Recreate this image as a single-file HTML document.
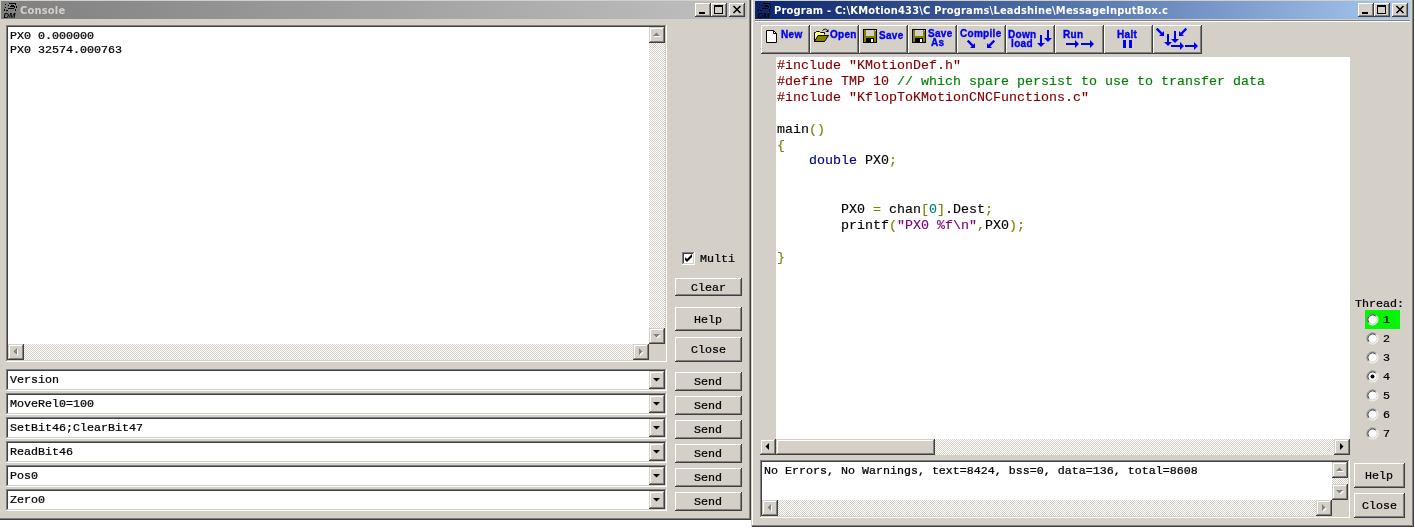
<!DOCTYPE html><html><head><meta charset="utf-8"><title>Console / Program</title><style>
*{margin:0;padding:0;box-sizing:border-box}
html,body{width:1415px;height:529px;background:#fff;overflow:hidden}
body{position:relative;font-family:"Liberation Mono",monospace;font-size:12px;color:#000}
.ab{position:absolute}
.face{background:#d4d0c8}
.btn{position:absolute;background:#d4d0c8;box-shadow:inset -1px -1px #404040,inset 1px 1px #fff,inset -2px -2px #808080,inset 2px 2px #d4d0c8;text-align:center;white-space:pre}
.sbtn{position:absolute;width:16px;height:16px;background:#d4d0c8;box-shadow:inset -1px -1px #404040,inset 1px 1px #d4d0c8,inset -2px -2px #808080,inset 2px 2px #fff}
.sunk{position:absolute;background:#fff;box-shadow:inset -1px -1px #fff,inset 1px 1px #808080,inset -2px -2px #d4d0c8,inset 2px 2px #404040}
.trk{position:absolute;background-color:#eae8e4;background-image:conic-gradient(#fff 25%,#d4d0c8 0 50%,#fff 0 75%,#d4d0c8 0);background-size:2px 2px}
.m9{font-family:"Liberation Mono",monospace;font-size:11.667px;line-height:15.385px;white-space:pre;position:absolute;transform-origin:0 0;transform:scaleY(.91);-webkit-text-stroke:.25px}
.m10{font-family:"Liberation Mono",monospace;font-size:13.333px;line-height:17.582px;white-space:pre;position:absolute;transform-origin:0 0;transform:scaleY(.91);-webkit-text-stroke:.15px}
.ttl{position:absolute;font-family:"DejaVu Sans Condensed","DejaVu Sans","Liberation Sans",sans-serif;font-weight:bold;font-size:11px;letter-spacing:.2px;line-height:18px;white-space:pre}
.tb{position:absolute;top:25px;width:49px;height:29px;background:#d4d0c8;box-shadow:inset -1px -1px #404040,inset 1px 1px #fff,inset -2px -2px #808080}
.tl{position:absolute;font-family:"Liberation Sans",sans-serif;font-weight:bold;font-size:10px;line-height:9px;color:#0000f0;white-space:pre;letter-spacing:.3px;-webkit-text-stroke:.35px #0000f0}
svg{position:absolute;overflow:visible}
.r{color:#800000}.g{color:#008000}.o{color:#808000}.n{color:#000080}.t{color:#008080}.p{color:#800080}
</style></head><body><div id="root" style="position:absolute;left:0;top:0;width:1415px;height:529px;will-change:transform">
<div class="ab face" style="left:0;top:0;width:751px;height:520px;box-shadow:inset -1px -1px #404040,inset -2px -2px #808080"></div>
<div class="ab" style="left:1px;top:1px;width:746px;height:18px;background:linear-gradient(90deg,#808080,#c0c0c0)"></div>
<div class="ttl" style="left:20px;top:2px;color:#d4d0c8">Console</div>
<svg style="left:2px;top:2px" width="16" height="16" viewBox="0 0 16 16"><path d="M7 1h7v1h-7zM13 2h1v1h-1zM3 2h1v1h-1zM9 3h3v1h-3zM6 3h1v1h-1zM8 4h5v1h-5zM14 4h1v2h-1zM3 5h1v1h-1zM12 5h1v1h-1zM6 6h6v1h-6zM2 7h1v2h-1zM13 7h1v2h-1zM4 8h2v1h-2z" fill="#000"/><text x="1.5" y="16.2" font-family="Liberation Sans,sans-serif" font-size="7" font-weight="bold" font-style="italic" fill="#000" textLength="12" lengthAdjust="spacingAndGlyphs">DM</text></svg>
<div class="btn" style="left:695px;top:3px;width:16px;height:14px"></div>
<div class="ab" style="left:699px;top:12px;width:6px;height:2px;background:#000"></div>
<div class="btn" style="left:711px;top:3px;width:16px;height:14px"></div>
<div class="ab" style="left:714px;top:5px;width:9px;height:9px;border:1px solid #000;border-top-width:2px"></div>
<div class="btn" style="left:729px;top:3px;width:16px;height:14px"></div>
<svg style="left:733px;top:6px" width="8" height="7" viewBox="0 0 8 7"><path d="M0.5 0 L7.5 7 M7.5 0 L0.5 7" stroke="#000" stroke-width="1.6" fill="none"/></svg>
<div class="sunk" style="left:6px;top:25px;width:661px;height:337px"></div>
<div class="m9" style="left:10px;top:30px">PX0 0.000000
PX0 32574.000763</div>
<div class="trk" style="left:649px;top:27px;width:16px;height:317px"></div>
<div class="sbtn" style="left:649px;top:27px"></div>
<svg style="left:649px;top:27px" width="16" height="16" viewBox="0 0 16 16"><polygon points="4,9 11,9 7.5,5.5" fill="#fff" transform="translate(1,1)"/><polygon points="4,9 11,9 7.5,5.5" fill="#808080"/></svg>
<div class="sbtn" style="left:649px;top:328px"></div>
<svg style="left:649px;top:328px" width="16" height="16" viewBox="0 0 16 16"><polygon points="4,6 11,6 7.5,9.5" fill="#fff" transform="translate(1,1)"/><polygon points="4,6 11,6 7.5,9.5" fill="#808080"/></svg>
<div class="trk" style="left:8px;top:344px;width:641px;height:16px"></div>
<div class="sbtn" style="left:8px;top:344px"></div>
<svg style="left:8px;top:344px" width="16" height="16" viewBox="0 0 16 16"><polygon points="9,4 9,11 5.5,7.5" fill="#fff" transform="translate(1,1)"/><polygon points="9,4 9,11 5.5,7.5" fill="#808080"/></svg>
<div class="sbtn" style="left:633px;top:344px"></div>
<svg style="left:633px;top:344px" width="16" height="16" viewBox="0 0 16 16"><polygon points="6,4 6,11 9.5,7.5" fill="#fff" transform="translate(1,1)"/><polygon points="6,4 6,11 9.5,7.5" fill="#808080"/></svg>
<div class="ab face" style="left:649px;top:344px;width:16px;height:16px"></div>
<div class="sunk" style="left:682px;top:252px;width:13px;height:13px"></div>
<svg style="left:685px;top:255px" width="7" height="7" viewBox="0 0 7 7"><path d="M0 2v3l2 2 5-5v-3l-5 5z" fill="#000" transform="translate(0,0)"/></svg>
<div class="m9" style="left:700px;top:253px">Multi</div>
<div class="btn" style="left:675px;top:278px;width:67px;height:18px"></div>
<div class="m9" style="left:691px;top:282px">Clear</div>
<div class="btn" style="left:675px;top:307px;width:67px;height:24px"></div>
<div class="m9" style="left:694px;top:314px">Help</div>
<div class="btn" style="left:675px;top:337px;width:67px;height:25px"></div>
<div class="m9" style="left:691px;top:344px">Close</div>
<div class="sunk" style="left:6px;top:369px;width:661px;height:22px"></div>
<div class="m9" style="left:10px;top:374px">Version</div>
<div class="sbtn" style="left:649px;top:371px;height:18px"></div>
<svg style="left:649px;top:371px" width="16" height="18" viewBox="0 0 16 18"><polygon points="4,7 11,7 7.5,10.5" fill="#000"/></svg>
<div class="btn" style="left:675px;top:372px;width:67px;height:19px"></div>
<div class="m9" style="left:694px;top:376px">Send</div>
<div class="sunk" style="left:6px;top:393px;width:661px;height:22px"></div>
<div class="m9" style="left:10px;top:398px">MoveRel0=100</div>
<div class="sbtn" style="left:649px;top:395px;height:18px"></div>
<svg style="left:649px;top:395px" width="16" height="18" viewBox="0 0 16 18"><polygon points="4,7 11,7 7.5,10.5" fill="#000"/></svg>
<div class="btn" style="left:675px;top:396px;width:67px;height:19px"></div>
<div class="m9" style="left:694px;top:400px">Send</div>
<div class="sunk" style="left:6px;top:417px;width:661px;height:22px"></div>
<div class="m9" style="left:10px;top:422px">SetBit46;ClearBit47</div>
<div class="sbtn" style="left:649px;top:419px;height:18px"></div>
<svg style="left:649px;top:419px" width="16" height="18" viewBox="0 0 16 18"><polygon points="4,7 11,7 7.5,10.5" fill="#000"/></svg>
<div class="btn" style="left:675px;top:420px;width:67px;height:19px"></div>
<div class="m9" style="left:694px;top:424px">Send</div>
<div class="sunk" style="left:6px;top:441px;width:661px;height:22px"></div>
<div class="m9" style="left:10px;top:446px">ReadBit46</div>
<div class="sbtn" style="left:649px;top:443px;height:18px"></div>
<svg style="left:649px;top:443px" width="16" height="18" viewBox="0 0 16 18"><polygon points="4,7 11,7 7.5,10.5" fill="#000"/></svg>
<div class="btn" style="left:675px;top:444px;width:67px;height:19px"></div>
<div class="m9" style="left:694px;top:448px">Send</div>
<div class="sunk" style="left:6px;top:465px;width:661px;height:22px"></div>
<div class="m9" style="left:10px;top:470px">Pos0</div>
<div class="sbtn" style="left:649px;top:467px;height:18px"></div>
<svg style="left:649px;top:467px" width="16" height="18" viewBox="0 0 16 18"><polygon points="4,7 11,7 7.5,10.5" fill="#000"/></svg>
<div class="btn" style="left:675px;top:468px;width:67px;height:19px"></div>
<div class="m9" style="left:694px;top:472px">Send</div>
<div class="sunk" style="left:6px;top:489px;width:661px;height:22px"></div>
<div class="m9" style="left:10px;top:494px">Zero0</div>
<div class="sbtn" style="left:649px;top:491px;height:18px"></div>
<svg style="left:649px;top:491px" width="16" height="18" viewBox="0 0 16 18"><polygon points="4,7 11,7 7.5,10.5" fill="#000"/></svg>
<div class="btn" style="left:675px;top:492px;width:67px;height:19px"></div>
<div class="m9" style="left:694px;top:496px">Send</div>
<div class="ab face" style="left:751px;top:0;width:663px;height:527px;box-shadow:inset -1px -1px #404040,inset -2px -2px #808080,inset 2px 0 #fff,inset 1px 0 #d4d0c8"></div>
<div class="ab" style="left:751px;top:0;width:1px;height:527px;background:#d4d0c8"></div>
<div class="ab" style="left:755px;top:1px;width:655px;height:18px;background:linear-gradient(90deg,#0a246a,#a6caf0)"></div>
<svg style="left:756px;top:2px" width="16" height="16" viewBox="0 0 16 16"><path d="M7 1h7v1h-7zM13 2h1v1h-1zM3 2h1v1h-1zM9 3h3v1h-3zM6 3h1v1h-1zM8 4h5v1h-5zM14 4h1v2h-1zM3 5h1v1h-1zM12 5h1v1h-1zM6 6h6v1h-6zM2 7h1v2h-1zM13 7h1v2h-1zM4 8h2v1h-2z" fill="#000"/><text x="1.5" y="16.2" font-family="Liberation Sans,sans-serif" font-size="7" font-weight="bold" font-style="italic" fill="#000" textLength="12" lengthAdjust="spacingAndGlyphs">DM</text></svg>
<div class="ttl" style="left:774px;top:2px;color:#fff">Program - C:\KMotion433\C Programs\Leadshine\MessageInputBox.c</div>
<div class="btn" style="left:1358px;top:3px;width:16px;height:14px"></div>
<div class="ab" style="left:1362px;top:12px;width:6px;height:2px;background:#000"></div>
<div class="btn" style="left:1374px;top:3px;width:16px;height:14px"></div>
<div class="ab" style="left:1377px;top:5px;width:9px;height:9px;border:1px solid #000;border-top-width:2px"></div>
<div class="btn" style="left:1392px;top:3px;width:16px;height:14px"></div>
<svg style="left:1396px;top:6px" width="8" height="7" viewBox="0 0 8 7"><path d="M0.5 0 L7.5 7 M7.5 0 L0.5 7" stroke="#000" stroke-width="1.6" fill="none"/></svg>
<div class="ab" style="left:755px;top:20px;width:655px;height:1px;background:#808080"></div>
<div class="ab" style="left:755px;top:21px;width:655px;height:1px;background:#fff"></div>
<div class="tb" style="left:761px"></div>
<div class="tb" style="left:810px"></div>
<div class="tb" style="left:859px"></div>
<div class="tb" style="left:908px"></div>
<div class="tb" style="left:957px"></div>
<div class="tb" style="left:1006px"></div>
<div class="tb" style="left:1055px"></div>
<div class="tb" style="left:1104px"></div>
<div class="tb" style="left:1153px"></div>
<svg style="left:766px;top:30px" width="12" height="14" viewBox="0 0 12 14"><path d="M0.5 0.5h7l3 3v9h-10z" fill="#fff" stroke="#000"/><path d="M7.500 0.500v3h3" fill="none" stroke="#000"/></svg>
<div class="tl" style="left:781px;top:30px">New</div>
<svg style="left:814px;top:28px" width="16" height="15" viewBox="0 0 16 15"><path d="M0.500 13.500v-9h1l1-1h3l1 1h4v2" fill="#ffff80" stroke="#000"/><path d="M0.500 13.500l3.500-6h10.500l-4 6z" fill="#808000" stroke="#000"/><path d="M8.500 2.500q3-3 5.500 0.500" fill="none" stroke="#000"/><path d="M14.500 1v3h-3z" fill="#000"/></svg>
<div class="tl" style="left:830px;top:30px">Open</div>
<svg style="left:863px;top:29px" width="14" height="14" viewBox="0 0 14 14"><rect x="0.500" y="0.500" width="13" height="13" fill="#808000" stroke="#000"/><rect x="3" y="1" width="8" height="6" fill="#d4d0c8"/><rect x="3" y="9" width="8" height="4" fill="#000"/><rect x="8" y="10" width="2" height="3" fill="#fff"/><rect x="12" y="1" width="1" height="1" fill="#d4d0c8"/></svg>
<div class="tl" style="left:879px;top:31px">Save</div>
<svg style="left:912px;top:29px" width="14" height="14" viewBox="0 0 14 14"><rect x="0.500" y="0.500" width="13" height="13" fill="#808000" stroke="#000"/><rect x="3" y="1" width="8" height="6" fill="#d4d0c8"/><rect x="3" y="9" width="8" height="4" fill="#000"/><rect x="8" y="10" width="2" height="3" fill="#fff"/><rect x="12" y="1" width="1" height="1" fill="#d4d0c8"/></svg>
<div class="tl" style="left:928px;top:29px">Save</div>
<div class="tl" style="left:931px;top:38px">As</div>
<div class="tl" style="left:960px;top:29px">Compile</div>
<svg style="left:0;top:0" width="1415" height="529" viewBox="0 0 1415 529"><line x1="967.7" y1="40.7" x2="973" y2="46" stroke="#0000f0" stroke-width="2.4"/><polygon points="975,48 975,43 970,48" fill="#0000f0"/><line x1="994.3" y1="40.7" x2="989" y2="46" stroke="#0000f0" stroke-width="2.4"/><polygon points="987,48 987,43 992,48" fill="#0000f0"/></svg>
<div class="tl" style="left:1008px;top:30px">Down
 load</div>
<svg style="left:0;top:0" width="1415" height="529" viewBox="0 0 1415 529"><rect x="1040.0" y="35" width="2" height="8" fill="#0000f0"/><polygon points="1041,47 1037,43 1045,43" fill="#0000f0"/><rect x="1047.0" y="30" width="2" height="8" fill="#0000f0"/><polygon points="1048,42 1044,38 1052,38" fill="#0000f0"/></svg>
<div class="tl" style="left:1063px;top:30px">Run</div>
<svg style="left:0;top:0" width="1415" height="529" viewBox="0 0 1415 529"><rect x="1066" y="43.0" width="9" height="2" fill="#0000f0"/><polygon points="1079,44 1075,40 1075,48" fill="#0000f0"/><rect x="1081" y="43.0" width="9" height="2" fill="#0000f0"/><polygon points="1094,44 1090,40 1090,48" fill="#0000f0"/></svg>
<div class="tl" style="left:1117px;top:30px">Halt</div>
<div class="ab" style="left:1123px;top:40px;width:3px;height:8px;background:#0000f0"></div>
<div class="ab" style="left:1129px;top:40px;width:3px;height:8px;background:#0000f0"></div>
<svg style="left:0;top:0" width="1415" height="529" viewBox="0 0 1415 529"><line x1="1156.7" y1="28.7" x2="1162" y2="34" stroke="#0000f0" stroke-width="2.4"/><polygon points="1164,36 1164,31 1159,36" fill="#0000f0"/><line x1="1186.3" y1="28.7" x2="1181" y2="34" stroke="#0000f0" stroke-width="2.4"/><polygon points="1179,36 1179,31 1184,36" fill="#0000f0"/><rect x="1167.0" y="34" width="2" height="8" fill="#0000f0"/><polygon points="1168,46 1164,42 1172,42" fill="#0000f0"/><rect x="1174.0" y="31" width="2" height="8" fill="#0000f0"/><polygon points="1175,43 1171,39 1179,39" fill="#0000f0"/><rect x="1171" y="45.0" width="9" height="2" fill="#0000f0"/><polygon points="1184,46 1180,42 1180,50" fill="#0000f0"/><rect x="1185" y="45.0" width="9" height="2" fill="#0000f0"/><polygon points="1198,46 1194,42 1194,50" fill="#0000f0"/></svg>
<div class="ab" style="left:776px;top:57px;width:574px;height:382px;background:#fff"></div>
<div class="m10" style="left:777px;top:58px"><span class="r">#include "KMotionDef.h"</span>
<span class="r">#define TMP 10 </span><span class="g">// which spare persist to use to transfer data</span>
<span class="r">#include "KflopToKMotionCNCFunctions.c"</span>

main<span class="o">()</span>
<span class="o">{</span>
    <span class="n">double</span> PX0<span class="o">;</span>


        PX0 <span class="o">=</span> chan<span class="o">[</span><span class="t">0</span><span class="o">]</span>.Dest<span class="o">;</span>
        printf<span class="o">(</span><span class="p">"PX0 %f\n"</span><span class="o">,</span>PX0<span class="o">);</span>

<span class="o">}</span></div>
<div class="trk" style="left:760px;top:439px;width:590px;height:16px"></div>
<div class="sbtn" style="left:760px;top:439px"></div>
<svg style="left:760px;top:439px" width="16" height="16" viewBox="0 0 16 16"><polygon points="9,4 9,11 5.5,7.5" fill="#000"/></svg>
<div class="sbtn" style="left:1334px;top:439px"></div>
<svg style="left:1334px;top:439px" width="16" height="16" viewBox="0 0 16 16"><polygon points="6,4 6,11 9.5,7.5" fill="#000"/></svg>
<div class="sbtn" style="left:776px;top:439px;width:159px"></div>
<div class="sunk" style="left:760px;top:460px;width:590px;height:58px"></div>
<div class="m9" style="left:764px;top:465px">No Errors, No Warnings, text=8424, bss=0, data=136, total=8608</div>
<div class="trk" style="left:1332px;top:462px;width:16px;height:38px"></div>
<div class="sbtn" style="left:1332px;top:462px"></div>
<svg style="left:1332px;top:462px" width="16" height="16" viewBox="0 0 16 16"><polygon points="4,9 11,9 7.5,5.5" fill="#fff" transform="translate(1,1)"/><polygon points="4,9 11,9 7.5,5.5" fill="#808080"/></svg>
<div class="sbtn" style="left:1332px;top:484px"></div>
<svg style="left:1332px;top:484px" width="16" height="16" viewBox="0 0 16 16"><polygon points="4,6 11,6 7.5,9.5" fill="#fff" transform="translate(1,1)"/><polygon points="4,6 11,6 7.5,9.5" fill="#808080"/></svg>
<div class="trk" style="left:762px;top:500px;width:570px;height:16px"></div>
<div class="sbtn" style="left:762px;top:500px"></div>
<svg style="left:762px;top:500px" width="16" height="16" viewBox="0 0 16 16"><polygon points="9,4 9,11 5.5,7.5" fill="#fff" transform="translate(1,1)"/><polygon points="9,4 9,11 5.5,7.5" fill="#808080"/></svg>
<div class="sbtn" style="left:1316px;top:500px"></div>
<svg style="left:1316px;top:500px" width="16" height="16" viewBox="0 0 16 16"><polygon points="6,4 6,11 9.5,7.5" fill="#fff" transform="translate(1,1)"/><polygon points="6,4 6,11 9.5,7.5" fill="#808080"/></svg>
<div class="ab face" style="left:1332px;top:500px;width:16px;height:16px"></div>
<div class="btn" style="left:1354px;top:463px;width:51px;height:25px"></div>
<div class="m9" style="left:1365px;top:470px">Help</div>
<div class="btn" style="left:1354px;top:493px;width:51px;height:25px"></div>
<div class="m9" style="left:1362px;top:500px">Close</div>
<div class="m9" style="left:1355px;top:298px">Thread:</div>
<div class="ab" style="left:1365px;top:310px;width:35px;height:19px;background:#06f406"></div>
<svg style="left:1366px;top:313px" width="13" height="13" viewBox="0 0 13 13"><circle cx="6.500" cy="6.500" r="5" fill="#fff"/><path d="M10.390 2.610A5.500 5.500 0 0 0 2.610 10.390" fill="none" stroke="#808080" stroke-width="1"/><path d="M10.390 2.610A5.500 5.500 0 0 1 2.610 10.390" fill="none" stroke="#fff" stroke-width="1"/><path d="M9.680 3.320A4.500 4.500 0 0 0 3.320 9.680" fill="none" stroke="#404040" stroke-width="1"/><path d="M9.680 3.320A4.500 4.500 0 0 1 3.320 9.680" fill="none" stroke="#d4d0c8" stroke-width="1"/></svg>
<div class="m9" style="left:1383px;top:314px">1</div>
<svg style="left:1366px;top:332px" width="13" height="13" viewBox="0 0 13 13"><circle cx="6.500" cy="6.500" r="5" fill="#fff"/><path d="M10.390 2.610A5.500 5.500 0 0 0 2.610 10.390" fill="none" stroke="#808080" stroke-width="1"/><path d="M10.390 2.610A5.500 5.500 0 0 1 2.610 10.390" fill="none" stroke="#fff" stroke-width="1"/><path d="M9.680 3.320A4.500 4.500 0 0 0 3.320 9.680" fill="none" stroke="#404040" stroke-width="1"/><path d="M9.680 3.320A4.500 4.500 0 0 1 3.320 9.680" fill="none" stroke="#d4d0c8" stroke-width="1"/></svg>
<div class="m9" style="left:1383px;top:333px">2</div>
<svg style="left:1366px;top:351px" width="13" height="13" viewBox="0 0 13 13"><circle cx="6.500" cy="6.500" r="5" fill="#fff"/><path d="M10.390 2.610A5.500 5.500 0 0 0 2.610 10.390" fill="none" stroke="#808080" stroke-width="1"/><path d="M10.390 2.610A5.500 5.500 0 0 1 2.610 10.390" fill="none" stroke="#fff" stroke-width="1"/><path d="M9.680 3.320A4.500 4.500 0 0 0 3.320 9.680" fill="none" stroke="#404040" stroke-width="1"/><path d="M9.680 3.320A4.500 4.500 0 0 1 3.320 9.680" fill="none" stroke="#d4d0c8" stroke-width="1"/></svg>
<div class="m9" style="left:1383px;top:352px">3</div>
<svg style="left:1366px;top:370px" width="13" height="13" viewBox="0 0 13 13"><circle cx="6.500" cy="6.500" r="5" fill="#fff"/><path d="M10.390 2.610A5.500 5.500 0 0 0 2.610 10.390" fill="none" stroke="#808080" stroke-width="1"/><path d="M10.390 2.610A5.500 5.500 0 0 1 2.610 10.390" fill="none" stroke="#fff" stroke-width="1"/><path d="M9.680 3.320A4.500 4.500 0 0 0 3.320 9.680" fill="none" stroke="#404040" stroke-width="1"/><path d="M9.680 3.320A4.500 4.500 0 0 1 3.320 9.680" fill="none" stroke="#d4d0c8" stroke-width="1"/><circle cx="6.500" cy="6.500" r="2" fill="#000"/></svg>
<div class="m9" style="left:1383px;top:371px">4</div>
<svg style="left:1366px;top:389px" width="13" height="13" viewBox="0 0 13 13"><circle cx="6.500" cy="6.500" r="5" fill="#fff"/><path d="M10.390 2.610A5.500 5.500 0 0 0 2.610 10.390" fill="none" stroke="#808080" stroke-width="1"/><path d="M10.390 2.610A5.500 5.500 0 0 1 2.610 10.390" fill="none" stroke="#fff" stroke-width="1"/><path d="M9.680 3.320A4.500 4.500 0 0 0 3.320 9.680" fill="none" stroke="#404040" stroke-width="1"/><path d="M9.680 3.320A4.500 4.500 0 0 1 3.320 9.680" fill="none" stroke="#d4d0c8" stroke-width="1"/></svg>
<div class="m9" style="left:1383px;top:390px">5</div>
<svg style="left:1366px;top:408px" width="13" height="13" viewBox="0 0 13 13"><circle cx="6.500" cy="6.500" r="5" fill="#fff"/><path d="M10.390 2.610A5.500 5.500 0 0 0 2.610 10.390" fill="none" stroke="#808080" stroke-width="1"/><path d="M10.390 2.610A5.500 5.500 0 0 1 2.610 10.390" fill="none" stroke="#fff" stroke-width="1"/><path d="M9.680 3.320A4.500 4.500 0 0 0 3.320 9.680" fill="none" stroke="#404040" stroke-width="1"/><path d="M9.680 3.320A4.500 4.500 0 0 1 3.320 9.680" fill="none" stroke="#d4d0c8" stroke-width="1"/></svg>
<div class="m9" style="left:1383px;top:409px">6</div>
<svg style="left:1366px;top:427px" width="13" height="13" viewBox="0 0 13 13"><circle cx="6.500" cy="6.500" r="5" fill="#fff"/><path d="M10.390 2.610A5.500 5.500 0 0 0 2.610 10.390" fill="none" stroke="#808080" stroke-width="1"/><path d="M10.390 2.610A5.500 5.500 0 0 1 2.610 10.390" fill="none" stroke="#fff" stroke-width="1"/><path d="M9.680 3.320A4.500 4.500 0 0 0 3.320 9.680" fill="none" stroke="#404040" stroke-width="1"/><path d="M9.680 3.320A4.500 4.500 0 0 1 3.320 9.680" fill="none" stroke="#d4d0c8" stroke-width="1"/></svg>
<div class="m9" style="left:1383px;top:428px">7</div>
</div></body></html>
